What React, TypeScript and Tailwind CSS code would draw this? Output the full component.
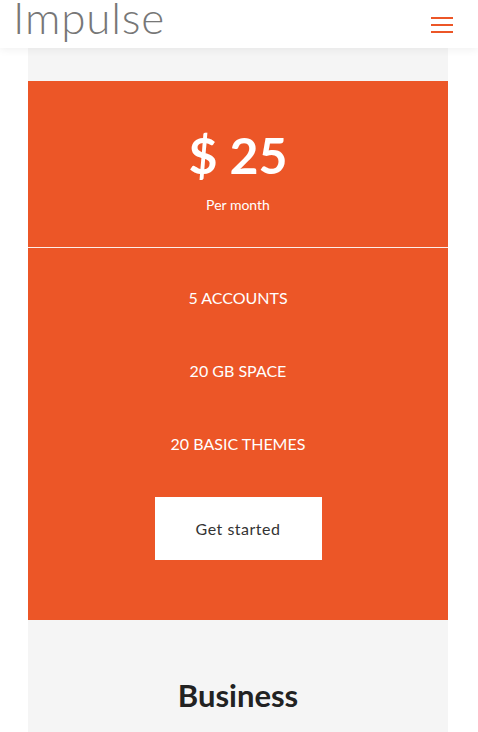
import React from "react";

export default function App() {
  const features = ["5 ACCOUNTS", "20 GB SPACE", "20 BASIC THEMES"];
  return (
    <div className="min-h-[732px] bg-white" style={{ fontFamily: "Lato, 'Open Sans', sans-serif" }}>
      <header className="relative z-10 h-[48px] bg-white shadow-[0_2px_8px_rgba(0,0,0,0.06)] flex items-center justify-between pl-[13px] pr-[25px] overflow-hidden">
        <div className="text-[44px] leading-none font-light text-[#777] tracking-[0.8px] -mt-[14px]">Impulse</div>
        <div className="flex flex-col gap-[5px] w-[22px] mt-[1px]">
          <span className="block h-[2px] bg-[#ec5627]" />
          <span className="block h-[2px] bg-[#ec5627]" />
          <span className="block h-[2px] bg-[#ec5627]" />
        </div>
      </header>
      <main className="ml-[28px] w-[420px]">
        <div className="bg-[#f5f5f5] pt-[33px]">
          <div className="bg-[#ec5627] text-white">
            <div className="h-[167px] flex flex-col items-center border-b border-white/90">
              <div className="mt-[44px] text-[50px] leading-[60px] font-bold">$ 25</div>
              <div className="mt-[10px] text-[14px] leading-[20px]">Per month</div>
            </div>
            <div className="flex flex-col items-center pt-[38px] pb-[60px]">
              <div className="flex flex-col items-center gap-[49px]">
                {features.map((f) => (
                  <div key={f} className="text-[16px] leading-[24px]">
                    {f}
                  </div>
                ))}
              </div>
              <button className="mt-[41px] w-[167px] h-[63px] bg-white text-[#333] text-[16px] tracking-[0.5px]">
                Get started
              </button>
            </div>
          </div>
          <div className="h-[112px] flex justify-center pt-[55px]">
            <div className="text-[31px] leading-[40px] font-bold text-[#222]">Business</div>
          </div>
        </div>
      </main>
    </div>
  );
}
